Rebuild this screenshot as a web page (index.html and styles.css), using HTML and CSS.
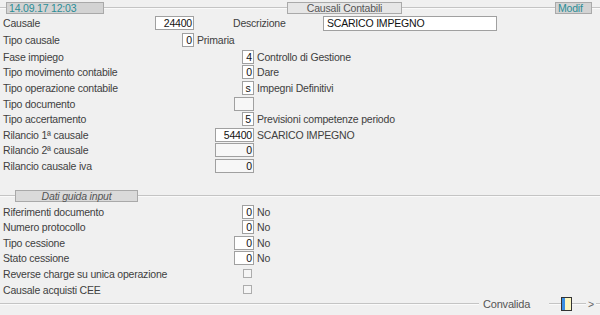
FILE: index.html
```html
<!DOCTYPE html>
<html lang="it">
<head>
    <meta charset="UTF-8">
    <title>Causali Contabili</title>
    <link rel="stylesheet" href="styles.css">
</head>
<body>
<div class="main">

    <!-- barra titolo -->
    <div class="titlebar">
        <div class="rule w6"></div>
        <div class="tab tab-date">14.09.17 12:03</div>
        <div class="rule w183"></div>
        <div class="tab tab-title">Causali Contabili</div>
        <div class="rule w153"></div>
        <div class="tab tab-mode">Modif</div>
        <div class="rule grow"></div>
    </div>

    <!-- testata -->
    <div class="row row-first">
        <div class="field w194"><span>Causale</span><span class="box num w39">24400</span></div>
        <span class="desc-lbl">Descrizione</span>
        <span class="box desc">SCARICO IMPEGNO</span>
    </div>
    <div class="row row-second">
        <div class="field w194"><span>Tipo causale</span><span class="box num w12">0</span></div>
        <span class="after">Primaria</span>
    </div>

    <div class="group">
        <div class="row">
            <div class="field"><span>Fase impiego</span><span class="box num w12">4</span></div>
            <span class="after">Controllo di Gestione</span>
        </div>
        <div class="row">
            <div class="field"><span>Tipo movimento contabile</span><span class="box num w12">0</span></div>
            <span class="after">Dare</span>
        </div>
        <div class="row">
            <div class="field"><span>Tipo operazione contabile</span><span class="box txt w12">s</span></div>
            <span class="after">Impegni Definitivi</span>
        </div>
        <div class="row">
            <div class="field"><span>Tipo documento</span><span class="box empty w20"></span></div>
        </div>
        <div class="row">
            <div class="field"><span>Tipo accertamento</span><span class="box txt w12">5</span></div>
            <span class="after">Previsioni competenze periodo</span>
        </div>
        <div class="row">
            <div class="field"><span>Rilancio 1ª causale</span><span class="box num w39">54400</span></div>
            <span class="after">SCARICO IMPEGNO</span>
        </div>
        <div class="row">
            <div class="field"><span>Rilancio 2ª causale</span><span class="box num empty w39">0</span></div>
        </div>
        <div class="row">
            <div class="field"><span>Rilancio causale iva</span><span class="box num empty w39">0</span></div>
        </div>
    </div>

    <!-- dati guida input -->
    <div class="section">
        <div class="rule w15"></div>
        <div class="tab tab-section">Dati guida input</div>
        <div class="rule grow"></div>
    </div>

    <div class="group">
        <div class="row">
            <div class="field"><span>Riferimenti documento</span><span class="box num w12">0</span></div>
            <span class="after">No</span>
        </div>
        <div class="row">
            <div class="field"><span>Numero protocollo</span><span class="box num w12">0</span></div>
            <span class="after">No</span>
        </div>
        <div class="row">
            <div class="field"><span>Tipo cessione</span><span class="box num w20">0</span></div>
            <span class="after">No</span>
        </div>
        <div class="row">
            <div class="field"><span>Stato cessione</span><span class="box num w20">0</span></div>
            <span class="after">No</span>
        </div>
        <div class="row">
            <div class="field"><span>Reverse charge su unica operazione</span><span class="check"></span></div>
        </div>
        <div class="row">
            <div class="field"><span>Causale acquisti CEE</span><span class="check"></span></div>
        </div>
    </div>

    <!-- barra comandi -->
    <div class="footer">
        <div class="rule w479"></div>
        <span class="cmd">Convalida</span>
        <div class="rule w12"></div>
        <span class="toggle"><span class="toggle-on"></span></span>
        <div class="rule w14"></div>
        <span class="next">&gt;</span>
        <div class="rule grow"></div>
    </div>

</div>
</body>
</html>
```

FILE: styles.css
```css
body {
    margin: 0;
    background-color: #f0f0f0;
}

.main {
    width: 600px;
    height: 315px;
    font-family: "Liberation Sans", Arial, sans-serif;
    font-size: 10.5px;
    letter-spacing: -0.2px;
    color: #404040;
    display: flex;
    flex-direction: column;
}

/* linee e linguette */
.rule {
    height: 0;
    border-top: 1px solid #c4c4c4;
    border-bottom: 1px solid #fafafa;
}

.grow { flex: 1; }
.w6 { width: 6px; }
.w12 { width: 12px; }
.w14 { width: 14px; }
.w15 { width: 15px; }
.w20 { width: 20px; }
.w39 { width: 39px; }
.w153 { width: 153px; }
.w183 { width: 183px; }
.w479 { width: 479px; }

.titlebar {
    display: flex;
    align-items: center;
    margin-top: 2px;
    height: 12px;
}

.tab {
    box-sizing: border-box;
    height: 12px;
    line-height: 10px;
    border: 1px solid #a9a9a9;
    padding: 0 2px;
    white-space: nowrap;
}

.tab-date {
    width: 98px;
    background-color: #d3d3d3;
    color: #2b8d96;
}

.tab-title {
    width: 115px;
    background-color: #e6e6e6;
    color: #555;
    text-align: center;
}

.tab-mode {
    width: 37px;
    background-color: #d3d3d3;
    color: #2b8d96;
}

.tab-section {
    width: 123px;
    background-color: #dadada;
    color: #555;
    font-style: italic;
    text-align: center;
}

/* righe della maschera */
.row {
    display: flex;
    align-items: center;
    height: 15.6px;
    padding-left: 3px;
}

.row-first {
    height: 16px;
    margin-top: 1px;
}

.row-second {
    height: 15px;
    margin-top: 1px;
}

.group {
    display: flex;
    flex-direction: column;
}

.row-second + .group {
    margin-top: 2px;
}

.field {
    display: flex;
    align-items: center;
    justify-content: space-between;
    width: 251px;
}

.field.w194 {
    width: 191px;
}

.box {
    box-sizing: border-box;
    height: 14px;
    line-height: 12px;
    border: 1px solid #a0a0a0;
    background-color: #fff;
    color: #111;
    padding: 0 1px;
    white-space: nowrap;
}

.num { text-align: right; }
.txt { text-align: center; }

.box.empty {
    background-color: #f7f7f7;
}

.after {
    margin-left: 3px;
    white-space: nowrap;
}

.desc-lbl {
    width: 90px;
    margin-left: 39px;
}

.desc {
    width: 174px;
    height: 15px;
    line-height: 13px;
    padding-left: 3px;
}

.check {
    box-sizing: border-box;
    width: 9px;
    height: 9px;
    border: 1px solid #acacac;
    background-color: #f5f5f5;
    margin-right: 2px;
}

/* sezione dati guida */
.section {
    display: flex;
    align-items: center;
    height: 12px;
    margin-top: 16px;
    margin-bottom: 2px;
}

/* barra comandi */
.footer {
    display: flex;
    align-items: center;
    height: 14px;
}

.cmd {
    width: 70px;
    padding-left: 4px;
    box-sizing: border-box;
    color: #555;
    font-size: 11px;
}

.toggle {
    box-sizing: border-box;
    width: 11px;
    height: 14px;
    border: 1px solid #333;
    background-color: #faf6c2;
    display: flex;
}

.toggle-on {
    width: 3px;
    background-color: #3a8fe3;
}

.next {
    width: 10px;
    color: #666;
    text-align: center;
}
```
